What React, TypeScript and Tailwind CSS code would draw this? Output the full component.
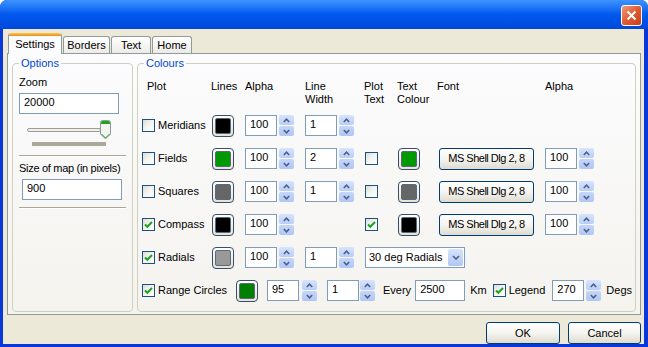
import React from "react";

const font = "font-['Liberation_Sans',Arial,sans-serif] text-[11px] leading-[13px] text-black";

function Check({ checked = false }: { checked?: boolean }) {
  return (
    <div className="flex h-[13px] w-[13px] shrink-0 items-center justify-center border border-[#1C5180] bg-gradient-to-br from-[#DCDCD7] via-[#F4F4F2] to-white">
      {checked && (
        <svg width="11" height="11" viewBox="0 0 11 11">
          <path d="M2 5.5 L4.3 7.8 L9 3" fill="none" stroke="#21A121" strokeWidth="2" />
        </svg>
      )}
    </div>
  );
}

function Swatch({ color }: { color: string }) {
  return (
    <div className="flex h-[22px] w-[22px] shrink-0 items-center justify-center rounded-[4px] border border-[#3A4E66] bg-gradient-to-b from-white to-[#E3E3DB] p-[2px]">
      <div className="h-full w-full rounded-[2px] border border-[#5A6A7A]" style={{ backgroundColor: color }} />
    </div>
  );
}

function Spin() {
  return (
    <div className="flex h-[21px] w-[15px] shrink-0 flex-col gap-px">
      <div className="flex flex-1 items-center justify-center rounded-[2px] bg-gradient-to-b from-[#D8E4FC] to-[#B9CDF8]">
        <svg width="7" height="5" viewBox="0 0 7 5">
          <path d="M0.8 4 L3.5 1.2 L6.2 4" fill="none" stroke="#4D6185" strokeWidth="1.6" />
        </svg>
      </div>
      <div className="flex flex-1 items-center justify-center rounded-[2px] bg-gradient-to-b from-[#C6D6FA] to-[#B0C6F6]">
        <svg width="7" height="5" viewBox="0 0 7 5">
          <path d="M0.8 1 L3.5 3.8 L6.2 1" fill="none" stroke="#4D6185" strokeWidth="1.6" />
        </svg>
      </div>
    </div>
  );
}

function Field({ value, w = "w-[32px]" }: { value: string; w?: string }) {
  return (
    <div className={`flex h-[21px] ${w} shrink-0 items-center border border-[#7F9DB9] bg-white pl-[4px] pb-[2px]`}>
      {value}
    </div>
  );
}

function SpinField({ value }: { value: string }) {
  return (
    <div className="flex items-center gap-[2px]">
      <Field value={value} />
      <Spin />
    </div>
  );
}

function Btn({ label, w }: { label: string; w: string }) {
  return (
    <div className={`flex h-[22px] ${w} shrink-0 items-center justify-center whitespace-nowrap rounded-[3px] border border-[#003C74] bg-gradient-to-b from-white via-[#F5F4EF] to-[#DEDBD0]`}>
      {label}
    </div>
  );
}

function Separator() {
  return <div className="h-[2px] border-t border-[#ACA899] border-b border-b-white" />;
}

type Row = {
  label: string;
  on: boolean;
  line: string;
  width?: string;
  plotText?: boolean;
  textColour?: string;
  combo?: string;
};

const rows: Row[] = [
  { label: "Meridians", on: false, line: "#000000", width: "1" },
  { label: "Fields", on: false, line: "#009900", width: "2", plotText: false, textColour: "#009900" },
  { label: "Squares", on: false, line: "#666666", width: "1", plotText: false, textColour: "#666666" },
  { label: "Compass", on: true, line: "#000000", plotText: true, textColour: "#000000" },
  { label: "Radials", on: true, line: "#999999", width: "1", combo: "30 deg Radials" },
];

export default function App() {
  return (
    <div className={`${font} flex h-[347px] w-[648px] flex-col rounded-t-[7px] bg-[#0838D8]`}>
      {/* title bar */}
      <div className="flex h-[29px] shrink-0 items-start justify-end rounded-t-[7px] bg-gradient-to-b from-[#3D93FF] via-[#0058EE] to-[#0049DA] pr-[6px] pt-[5px]">
        <div className="flex h-[21px] w-[21px] items-center justify-center rounded-[3px] border border-white bg-gradient-to-br from-[#F09A7C] via-[#E05A30] to-[#C5401B]">
          <svg width="11" height="11" viewBox="0 0 11 11">
            <path d="M1.5 1.5 L9.5 9.5 M9.5 1.5 L1.5 9.5" stroke="white" strokeWidth="2" />
          </svg>
        </div>
      </div>

      {/* body */}
      <div className="mb-[4px] ml-[3px] mr-[4px] flex flex-1 flex-col bg-[#ECE9D8]">
        {/* tabs */}
        <div className="mt-[4px] flex items-end gap-px pl-[5px]">
          <div className="relative z-10 -mb-px flex h-[21px] w-[54px] flex-col rounded-t-[3px] border-x border-[#919B9C] bg-[#FCFCFE]">
            <div className="h-[3px] rounded-t-[3px] bg-gradient-to-b from-[#FFC83C] to-[#E68B2C]" />
            <div className="flex flex-1 items-center justify-center pb-[2px]">Settings</div>
          </div>
          {[
            ["Borders", "w-[47px]"],
            ["Text", "w-[40px]"],
            ["Home", "w-[40px]"],
          ].map(([t, w]) => (
            <div
              key={t}
              className={`flex h-[17px] ${w} items-center justify-center rounded-t-[3px] border-x border-t border-[#919B9C] bg-gradient-to-b from-white to-[#ECEBE6]`}
            >
              {t}
            </div>
          ))}
        </div>

        {/* tab pane */}
        <div className="ml-[4px] flex h-[262px] w-[634px] gap-[4px] border border-[#919B9C] bg-gradient-to-b from-[#FCFCFE] to-[#F4F3EE] pb-[2px] pl-[4px] pr-[4px] pt-[3px]">
          {/* Options */}
          <fieldset className="flex w-[121px] shrink-0 flex-col rounded-[4px] border border-[#D0D0BF] px-[6px]">
            <legend className="px-[2px] text-[#0046D5]">Options</legend>
            <div className="mt-[6px]">Zoom</div>
            <div className="mt-[4px]">
              <Field value="20000" w="w-[100px]" />
            </div>
            {/* slider */}
            <div className="ml-[8px] mt-[5px] flex h-[30px] w-[84px] flex-col">
              <div className="flex h-[21px] items-center">
                <div className="h-[4px] w-[74px] rounded-[2px] border border-[#9D9C99] bg-[#F0EFEA]" />
                <div className="relative -ml-[1px] h-[20px] w-[11px]">
                  <svg width="11" height="20" viewBox="0 0 11 20">
                    <path d="M0.5 2.5 Q0.5 0.5 2.5 0.5 H8.5 Q10.5 0.5 10.5 2.5 V14 L5.5 19 L0.5 14 Z" fill="#F4F3EE" stroke="#8C9AA5" />
                    <path d="M1 2.5 Q1 1 2.5 1 H8.5 Q10 1 10 2.5 V4 H1 Z" fill="#21A121" />
                    <path d="M1.5 14 L5.5 18 L9.5 14" fill="none" stroke="#21A121" />
                  </svg>
                </div>
              </div>
              <div className="ml-[5px] mt-[2px] h-[4px] w-[74px] bg-[#ACA899]" />
            </div>
            <div className="mt-[6px]">
              <Separator />
            </div>
            <div className="mt-[5px] whitespace-nowrap tracking-[-0.3px]">Size of map (in pixels)</div>
            <div className="ml-[3px] mt-[4px]">
              <Field value="900" w="w-[100px]" />
            </div>
            <div className="mt-[7px]">
              <Separator />
            </div>
          </fieldset>

          {/* Colours */}
          <fieldset className="flex flex-1 flex-col rounded-[4px] border border-[#D0D0BF] pl-[4px]">
            <legend className="ml-[2px] px-[2px] text-[#0046D5]">Colours</legend>
            <div className="mt-[10px] grid grid-cols-[69px_34px_60px_59px_33px_40px_108px_60px]">
              {/* header */}
              <div className="h-[29px] pl-[5px]">Plot</div>
              <div>Lines</div>
              <div>Alpha</div>
              <div>
                Line
                <br />
                Width
              </div>
              <div>
                Plot
                <br />
                Text
              </div>
              <div>
                Text
                <br />
                Colour
              </div>
              <div>Font</div>
              <div>Alpha</div>

              {rows.map((r) => (
                <React.Fragment key={r.label}>
                  <div className="flex h-[33px] items-center gap-[3px]">
                    <Check checked={r.on} />
                    <span>{r.label}</span>
                  </div>
                  <div className="flex items-center pl-px">
                    <Swatch color={r.line} />
                  </div>
                  <div className="flex items-center">
                    <SpinField value="100" />
                  </div>
                  <div className="flex items-center">{r.width && <SpinField value={r.width} />}</div>
                  {r.combo ? (
                    <div className="col-span-4 flex items-center pl-px">
                      <div className="flex h-[21px] w-[100px] items-center justify-between border border-[#7F9DB9] bg-white pl-[3px] pr-px">
                        <span>{r.combo}</span>
                        <div className="flex h-[17px] w-[15px] items-center justify-center rounded-[2px] bg-gradient-to-b from-[#D8E4FC] to-[#B0C6F6]">
                          <svg width="8" height="5" viewBox="0 0 8 5">
                            <path d="M1 1 L4 4 L7 1" fill="none" stroke="#4D6185" strokeWidth="1.6" />
                          </svg>
                        </div>
                      </div>
                    </div>
                  ) : (
                    <>
                      <div className="flex items-center pl-px">
                        {r.plotText !== undefined && <Check checked={r.plotText} />}
                      </div>
                      <div className="flex items-center pl-px">{r.textColour && <Swatch color={r.textColour} />}</div>
                      <div className="flex items-center pl-[2px] tracking-[-0.5px]">
                        {r.textColour && <Btn label="MS Shell Dlg 2, 8" w="w-[95px]" />}
                      </div>
                      <div className="flex items-center">{r.textColour && <SpinField value="100" />}</div>
                    </>
                  )}
                </React.Fragment>
              ))}
            </div>

            {/* range circles */}
            <div className="flex h-[33px] items-center">
              <div className="flex w-[94px] items-center gap-[3px]">
                <Check checked />
                <span>Range Circles</span>
              </div>
              <Swatch color="#007F00" />
              <div className="ml-[9px] flex items-center gap-[3px]">
                <Field value="95" />
                <Spin />
              </div>
              <div className="ml-[10px] flex items-center gap-px">
                <Field value="1" />
                <Spin />
              </div>
              <span className="ml-[8px]">Every</span>
              <div className="ml-[4px]">
                <Field value="2500" w="w-[50px]" />
              </div>
              <span className="ml-[5px]">Km</span>
              <div className="ml-[6px] flex items-center gap-[3px]">
                <Check checked />
                <span>Legend</span>
              </div>
              <div className="ml-[7px] flex items-center gap-[2px]">
                <Field value="270" />
                <Spin />
              </div>
              <span className="ml-[5px]">Degs</span>
            </div>
          </fieldset>
        </div>

        {/* buttons */}
        <div className="mt-[7px] flex justify-end gap-[8px] pr-[3px]">
          <Btn label="OK" w="w-[74px]" />
          <Btn label="Cancel" w="w-[73px]" />
        </div>
      </div>
    </div>
  );
}
